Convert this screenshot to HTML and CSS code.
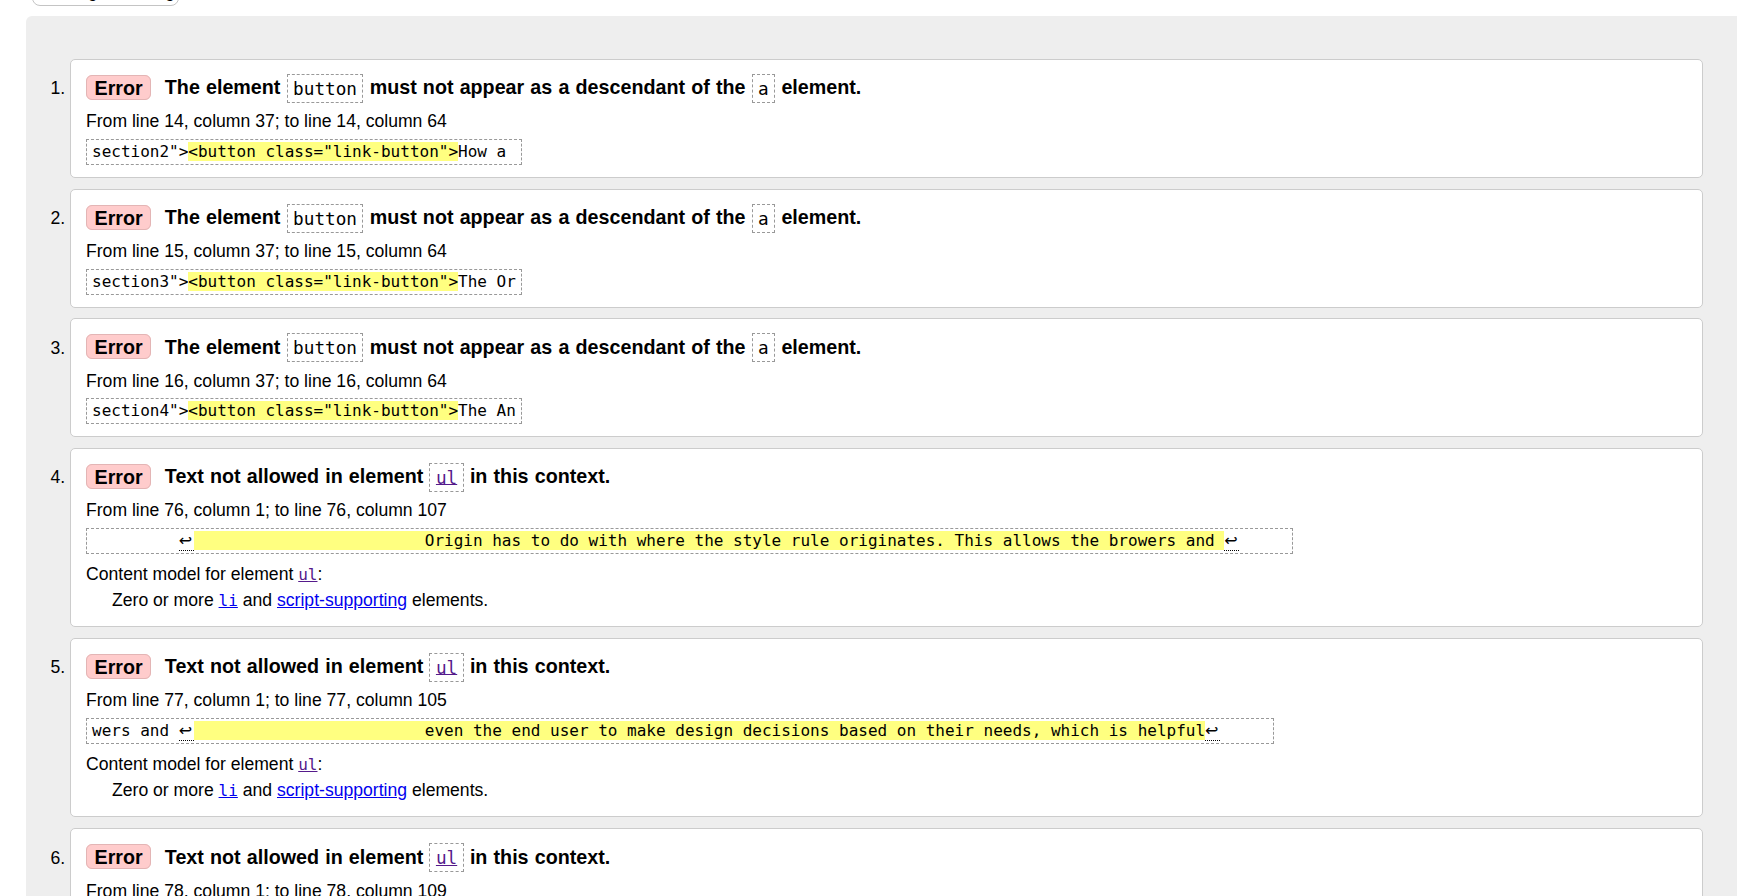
FILE: index.html
```html
<!DOCTYPE html>
<html lang="en">
<head>
<meta charset="utf-8">
<title>Validation results</title>
<link rel="stylesheet" href="styles.css">
</head>
<body>
<div class="toolbar"><button class="filter-btn" type="button">Message Filtering</button></div>
<div class="panel">
  <ol class="messages">
    <li class="msg">
      <p class="title"><strong class="badge">Error</strong> The element <code class="ref">button</code> must not appear as a descendant of the <code class="ref">a</code> element.</p>
      <p class="loc">From line 14, column 37; to line 14, column 64</p>
      <code class="extract">section2"&gt;<mark>&lt;button class="link-button"&gt;</mark>How a </code>
    </li>
    <li class="msg">
      <p class="title"><strong class="badge">Error</strong> The element <code class="ref">button</code> must not appear as a descendant of the <code class="ref">a</code> element.</p>
      <p class="loc">From line 15, column 37; to line 15, column 64</p>
      <code class="extract">section3"&gt;<mark>&lt;button class="link-button"&gt;</mark>The Or</code>
    </li>
    <li class="msg">
      <p class="title"><strong class="badge">Error</strong> The element <code class="ref">button</code> must not appear as a descendant of the <code class="ref">a</code> element.</p>
      <p class="loc">From line 16, column 37; to line 16, column 64</p>
      <code class="extract">section4"&gt;<mark>&lt;button class="link-button"&gt;</mark>The An</code>
    </li>
    <li class="msg">
      <p class="title"><strong class="badge">Error</strong> Text not allowed in element <code class="ref"><a class="visited" href="#ul">ul</a></code> in this context.</p>
      <p class="loc">From line 76, column 1; to line 76, column 107</p>
      <code class="extract">         <abbr class="nl" title="U+000A">↩</abbr><mark>                        Origin has to do with where the style rule originates. This allows the browers and </mark><abbr class="nl" title="U+000A">↩</abbr>     </code>
      <p class="cm">Content model for element <a class="visited" href="#ul"><code>ul</code></a>:</p>
      <p class="cm-body">Zero or more <a class="link" href="#li"><code>li</code></a> and <a class="link" href="#script">script-supporting</a> elements.</p>
    </li>
    <li class="msg">
      <p class="title"><strong class="badge">Error</strong> Text not allowed in element <code class="ref"><a class="visited" href="#ul">ul</a></code> in this context.</p>
      <p class="loc">From line 77, column 1; to line 77, column 105</p>
      <code class="extract">wers and <abbr class="nl" title="U+000A">↩</abbr><mark>                        even the end user to make design decisions based on their needs, which is helpful</mark><abbr class="nl" title="U+000A">↩</abbr>     </code>
      <p class="cm">Content model for element <a class="visited" href="#ul"><code>ul</code></a>:</p>
      <p class="cm-body">Zero or more <a class="link" href="#li"><code>li</code></a> and <a class="link" href="#script">script-supporting</a> elements.</p>
    </li>
    <li class="msg">
      <p class="title"><strong class="badge">Error</strong> Text not allowed in element <code class="ref"><a class="visited" href="#ul">ul</a></code> in this context.</p>
      <p class="loc">From line 78, column 1; to line 78, column 109</p>
      <code class="extract">helpful<abbr class="nl" title="U+000A">↩</abbr><mark>                        for people with visual impairments or other accessibility needs.</mark><abbr class="nl" title="U+000A">↩</abbr>     </code>
      <p class="cm">Content model for element <a class="visited" href="#ul"><code>ul</code></a>:</p>
      <p class="cm-body">Zero or more <a class="link" href="#li"><code>li</code></a> and <a class="link" href="#script">script-supporting</a> elements.</p>
    </li>
  </ol>
</div>
</body>
</html>
```

FILE: styles.css
```css
* {
  box-sizing: border-box;
}

html,
body {
  margin: 0;
  padding: 0;
  background: #ffffff;
}

body {
  font-family: "Liberation Sans", Arial, sans-serif;
  font-size: 17.6px;
  color: #000000;
  overflow: hidden;
}

.toolbar {
  margin-top: -25.1px;
  padding-left: 32px;
  height: 30.7px;
}

.filter-btn {
  font-family: "Liberation Sans", Arial, sans-serif;
  font-size: 17.6px;
  line-height: 20px;
  height: 30.7px;
  padding: 5px 3px 3.7px;
  border: 1px solid #c4c4c4;
  border-radius: 8px;
  background: #ffffff;
  color: #000000;
}

.panel {
  margin: 10.4px 0 0 26px;
  background: #eeeeee;
  border-top-left-radius: 6px;
  padding: 43px 34px 40px 44px;
}

.messages {
  margin: 0;
  padding: 0;
  list-style: decimal outside;
}

.msg {
  background: #ffffff;
  border: 1px solid #cccccc;
  border-radius: 5px;
  padding: 12.5px 15px 12px;
  margin-bottom: 10.67px;
}

.title {
  margin: 0 0 7px;
  font-size: 19.7px;
  font-weight: bold;
  line-height: 30px;
  word-spacing: 0.7px;
}

.badge {
  font-weight: bold;
  background: #ffcccc;
  border: 1px solid #e3b5b5;
  border-radius: 6px;
  padding: 0.5px 7.5px;
  margin-right: 7.5px;
  word-spacing: 0;
}

.ref {
  font-family: "DejaVu Sans Mono", "Liberation Mono", monospace;
  font-size: 17.7px;
  font-weight: normal;
  line-height: 18px;
  border: 1px dashed #999999;
  padding: 3.5px 5.5px;
  word-spacing: 0;
}

.loc {
  margin: 0;
  line-height: 24px;
}

.extract {
  display: block;
  width: max-content;
  margin-top: 5.5px;
  font-family: "DejaVu Sans Mono", "Liberation Mono", monospace;
  font-size: 16px;
  line-height: 20px;
  padding: 2px 5px;
  border: 1px dashed #999999;
  white-space: pre;
}

.extract mark {
  background: #ffff80;
  color: inherit;
}

.nl {
  font-family: "DejaVu Sans", sans-serif;
  text-decoration: none;
  border-bottom: 1px dotted #000000;
  padding-right: 1.5px;
}

.cm {
  margin: 7.7px 0 0;
  line-height: 24px;
}

.cm-body {
  margin: 2.7px 0 2px;
  padding-left: 26px;
  line-height: 24px;
}

.cm code,
.cm-body code {
  font-family: "DejaVu Sans Mono", "Liberation Mono", monospace;
  font-size: 16px;
  line-height: 16px;
}

a.visited {
  color: #551a8b;
  text-decoration: underline;
}

a.link {
  color: #0000ee;
  text-decoration: underline;
}
```
